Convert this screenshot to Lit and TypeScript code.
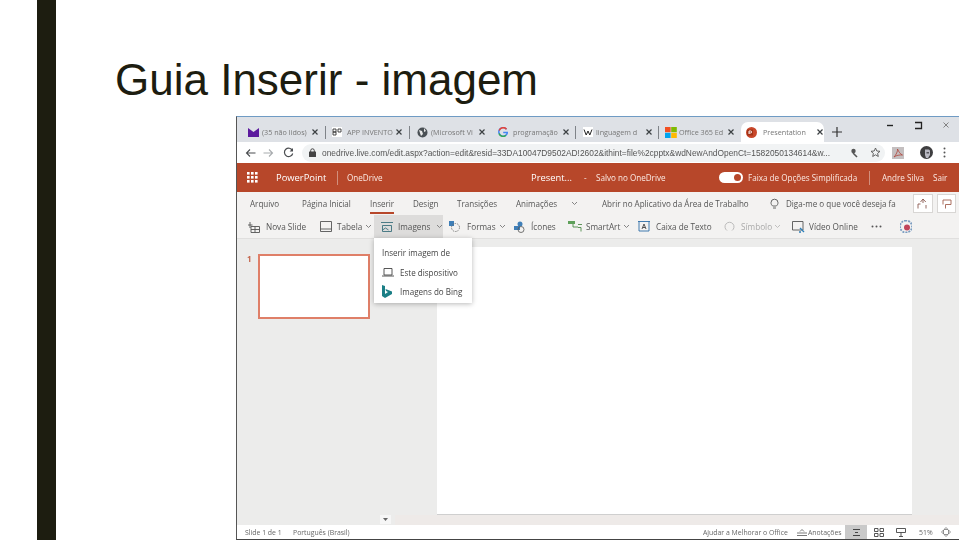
import { LitElement, html, css, svg, TemplateResult } from "lit";
import { customElement } from "lit/decorators.js";

type Item = { x: number; w: number; c: unknown; k?: string };
const ORIGIN = 237;

function row(items: Item[], start = ORIGIN) {
  let end = start;
  return items.map((it) => {
    const m = it.x - end;
    end = it.x + it.w;
    return html`<span class="cell ${it.k ?? ""}" style="margin-left:${m}px;width:${it.w}px">${it.c}</span>`;
  });
}
const ic = (w: number, h: number, body: TemplateResult | ReturnType<typeof svg>) =>
  html`<svg width=${w} height=${h} viewBox="0 0 ${w} ${h}" fill="none">${body}</svg>`;

const X = ic(8, 8, svg`<path d="M1.500 1.500l5 5M6.500 1.500l-5 5" stroke="#3c4043" stroke-width="1.200"/>`);
const CHEV = ic(7, 5, svg`<path d="M1 1l2.500 2.500L6 1" stroke="#777" stroke-width=".9"/>`);
const SEP = html`<i class="vsep"></i>`;

const mail = ic(11, 9, svg`<path d="M0 0l5.500 4L11 0v9H0z" fill="#5c1a9e"/>`);
const bp = ic(10, 10, svg`<rect width="10" height="10" fill="#fff"/><path d="M1 2h3v3H1zM1 5h3v3H1zM6 2h3v3H6z" stroke="#333" stroke-width=".9"/>`);
const globe = ic(11, 11, svg`<circle cx="5.500" cy="5.500" r="5" fill="#4a5055"/><path d="M2 3l3 1 1 3-2 2zM7 1l2 3-2 1z" fill="#e8e8e8"/>`);
const gl = ic(10, 10, svg`<path d="M8.500 2.200A4.300 4.300 0 1 0 9.400 5.500H5.200" stroke="#4285f4" stroke-width="1.500"/><path d="M1.200 3.500A4.300 4.300 0 0 1 8.500 2.200" stroke="#ea4335" stroke-width="1.500"/><path d="M1 6.500a4.300 4.300 0 0 0 7 1.700" stroke="#34a853" stroke-width="1.500"/>`);
const wiki = ic(10, 10, svg`<rect width="10" height="10" fill="#fff"/><path d="M1 2.500l2.200 5.500L5 4l1.800 4L9 2.500" stroke="#222" stroke-width="1"/>`);
const ms = ic(12, 11, svg`<rect width="5.600" height="5.200" fill="#f25022"/><rect x="6.200" width="5.600" height="5.200" fill="#7fba00"/><rect y="5.800" width="5.600" height="5.200" fill="#00a4ef"/><rect x="6.200" y="5.800" width="5.600" height="5.200" fill="#ffb900"/>`);
const pp = ic(11, 11, svg`<circle cx="5.500" cy="5.500" r="5.500" fill="#c8472a"/><rect x="1" y="2.500" width="6" height="6" fill="#a33317"/><path d="M3 7V4h1.600a1 1 0 0 1 0 2H3" stroke="#fff" stroke-width=".9"/>`);

const tabs: Item[] = [
  { x: 248, w: 11, c: mail },
  { x: 262, w: 46, c: "(35 não lidos)", k: "tabt" },
  { x: 311, w: 8, c: X },
  { x: 325, w: 1, c: SEP },
  { x: 332, w: 10, c: bp },
  { x: 347, w: 47, c: "APP INVENTO", k: "tabt" },
  { x: 395, w: 8, c: X },
  { x: 409, w: 1, c: SEP },
  { x: 417, w: 11, c: globe },
  { x: 431, w: 43, c: "(Microsoft Vi", k: "tabt" },
  { x: 478, w: 8, c: X },
  { x: 498, w: 10, c: gl },
  { x: 513, w: 44, c: "programação", k: "tabt" },
  { x: 562, w: 8, c: X },
  { x: 575, w: 1, c: SEP },
  { x: 583, w: 10, c: wiki },
  { x: 596, w: 47, c: "linguagem d", k: "tabt" },
  { x: 645, w: 8, c: X },
  { x: 658, w: 1, c: SEP },
  { x: 665, w: 12, c: ms },
  { x: 679, w: 46, c: "Office 365 Ed", k: "tabt" },
  { x: 727, w: 8, c: X },
  {
    x: 741,
    w: 83,
    k: "active",
    c: html`${pp}<span class="tabt at">Presentation</span>${X}`,
  },
  { x: 832, w: 10, c: ic(10, 10, svg`<path d="M5 0v10M0 5h10" stroke="#333" stroke-width="1.200"/>`) },
  { x: 886, w: 8, k: "wc", c: ic(8, 10, svg`<path d="M1 5.500h6" stroke="#222" stroke-width="1.400"/>`) },
  { x: 914, w: 9, k: "wc", c: ic(9, 10, svg`<path d="M1 2.500h6.500v6H1" stroke="#222" stroke-width="1.300"/>`) },
  { x: 942, w: 8, k: "wc", c: ic(8, 10, svg`<path d="M1.500 2.500l5 5M6.500 2.500l-5 5" stroke="#777" stroke-width=".9"/>`) },
];

const addr: Item[] = [
  { x: 245, w: 11, c: ic(11, 10, svg`<path d="M10.500 5H1.500M5 1.500L1.500 5 5 8.500" stroke="#4a4d50" stroke-width="1.100"/>`) },
  { x: 263, w: 11, c: ic(11, 10, svg`<path d="M.5 5h9M6 1.500L9.500 5 6 8.500" stroke="#a8abae" stroke-width="1.100"/>`) },
  { x: 283, w: 11, c: ic(11, 11, svg`<path d="M9.400 3.500A4.200 4.200 0 1 0 9.700 6.500" stroke="#4a4d50" stroke-width="1.200"/><path d="M10 1v3.400H6.600z" fill="#4a4d50"/>`) },
  {
    x: 302,
    w: 583,
    k: "pill",
    c: html`${ic(7, 9, svg`<rect y="3.500" width="7" height="5.500" rx=".5" fill="#444"/><path d="M1.700 4V2.600a1.800 1.800 0 0 1 3.600 0V4" stroke="#444"/>`)}
      <span class="url">onedrive.live.com/edit.aspx?action=edit&resid=33DA10047D9502AD!2602&ithint=file%2cpptx&wdNewAndOpenCt=1582050134614&w...</span>
      <span class="pillic">${ic(9, 10, svg`<circle cx="3.500" cy="3" r="2.200" fill="#555"/><path d="M3 5l4 4" stroke="#555" stroke-width="1.600"/>`)}</span>
      ${ic(11, 11, svg`<path d="M5.500 1l1.300 3 3.200.3-2.400 2.100.7 3.100-2.800-1.700-2.800 1.700.7-3.100L1 4.300 4.200 4z" stroke="#555" stroke-width=".9"/>`)}`,
  },
  { x: 892, w: 12, c: ic(12, 12, svg`<rect width="12" height="12" fill="#c4bfc0"/><path d="M2 10C4 8 6 4 5.500 2 7 5 8 7 10.500 8 7.500 7.800 4.500 8.200 2 10z" stroke="#b0443a" stroke-width=".8"/>`) },
  { x: 920, w: 13, c: ic(13, 13, svg`<circle cx="6.500" cy="6.500" r="6.500" fill="#3e3e40"/><path d="M5 3.500h3.500a1.500 1.500 0 0 1 1.500 1.500v4L8 12H6L5 9z" fill="#b9b9c2"/><path d="M6.500 6h2.500v1.500H6.500z" fill="#55555c"/>`) },
  { x: 943, w: 3, c: ic(3, 11, svg`<circle cx="1.500" cy="1.500" r="1" fill="#555"/><circle cx="1.500" cy="5.500" r="1" fill="#555"/><circle cx="1.500" cy="9.500" r="1" fill="#555"/>`) },
];

const waffle = ic(11, 11, svg`${[0, 4, 8].flatMap((x) => [0, 4, 8].map((y) => svg`<rect x=${x} y=${y} width="2.600" height="2.600" fill="#fff"/>`))}`);
const red: Item[] = [
  { x: 247, w: 11, c: waffle },
  { x: 276, w: 52, c: "PowerPoint", k: "rt big" },
  { x: 337, w: 1, c: html`<i class="wsep"></i>` },
  { x: 347, w: 37, c: "OneDrive", k: "rt" },
  { x: 531, w: 42, c: "Present...", k: "rt big" },
  { x: 584, w: 4, c: "-", k: "rt" },
  { x: 596, w: 72, c: "Salvo no OneDrive", k: "rt" },
  { x: 719, w: 24, c: html`<span class="toggle"><b></b></span>` },
  { x: 748, w: 110, c: "Faixa de Opções Simplificada", k: "rt" },
  { x: 869, w: 1, c: html`<i class="wsep"></i>` },
  { x: 882, w: 43, c: "Andre Silva", k: "rt" },
  { x: 933, w: 15, c: "Sair", k: "rt" },
];

const rib: Item[] = [
  { x: 250, w: 30, c: "Arquivo" },
  { x: 302, w: 50, c: "Página Inicial" },
  { x: 370, w: 24, c: html`Inserir<i class="under"></i>`, k: "ins" },
  { x: 413, w: 27, c: "Design" },
  { x: 457, w: 40, c: "Transições" },
  { x: 516, w: 41, c: "Animações" },
  { x: 571, w: 7, c: CHEV },
  { x: 602, w: 147, c: "Abrir no Aplicativo da Área de Trabalho" },
  { x: 770, w: 9, c: ic(9, 12, svg`<path d="M2.700 8C1.500 7 1 6 1 4.700a3.500 3.500 0 0 1 7 0C8 6 7.500 7 6.300 8zM3 10h3" stroke="#555" stroke-width=".9"/>`) },
  { x: 786, w: 110, c: "Diga-me o que você deseja fa" },
  { x: 913, w: 20, k: "bx", c: ic(12, 11, svg`<path d="M1 10.500V6h2.500M9 10.500V7M6 1l2.800 3M6 1L3.500 4M6 1v4" stroke="#8a5a50" stroke-width=".9"/>`) },
  { x: 937, w: 19, k: "bx", c: ic(10, 10, svg`<path d="M1 1h8v4.500H3.500V9.500M1 1v4.500" stroke="#a3604f" stroke-width=".9"/>`) },
];

const tool: Item[] = [
  { x: 248, w: 12, c: ic(12, 12, svg`<path d="M3 5.500h8.500v6H3zM3 8.500h8.500M7 5.500v6M2 1v6M0 4h4.500" stroke="#555" stroke-width=".9"/>`) },
  { x: 266, w: 42, c: "Nova Slide" },
  { x: 320, w: 12, c: ic(12, 11, svg`<path d="M.5 .500h11v10H.5zM.5 8h11" stroke="#555" stroke-width=".9"/>`) },
  { x: 337, w: 26, c: "Tabela" },
  { x: 365, w: 7, c: CHEV },
  {
    x: 374,
    w: 69,
    k: "hot",
    c: html`${ic(12, 10, svg`<path d="M0 .500h12M1.500 3.500h9v6h-9zM1.500 8l3-2 3 2" stroke="#3a6f7c" stroke-width=".9"/>`)}<span class="hott">Imagens</span>${CHEV}`,
  },
  { x: 449, w: 11, c: ic(11, 11, svg`<rect width="5" height="5" fill="#3f7fb8"/><circle cx="6.500" cy="6.500" r="4" stroke="#666" stroke-width=".8" stroke-dasharray="1.500 1" />`) },
  { x: 467, w: 28, c: "Formas" },
  { x: 499, w: 7, c: CHEV },
  { x: 514, w: 11, c: ic(11, 12, svg`<circle cx="6" cy="3" r="2.500" fill="#3f7fb8"/><rect y="5" width="6" height="4" fill="#3f7fb8"/><circle cx="7" cy="8.500" r="3" stroke="#555" stroke-width=".8"/>`) },
  { x: 531, w: 26, c: "Ícones" },
  { x: 568, w: 14, c: ic(14, 11, svg`<rect width="7" height="3" fill="#5fa05a"/><path d="M5 3v3h5M10 3.500h4M10 6.500h3v4" stroke="#4f8a4a" stroke-width=".9"/>`) },
  { x: 586, w: 33, c: "SmartArt" },
  { x: 623, w: 7, c: CHEV },
  { x: 638, w: 12, c: ic(12, 11, svg`<path d="M0 .500h12M1 .500v9.500h10V.500" stroke="#2f6ea8" stroke-width=".9"/><path d="M4 8l2-5 2 5M4.800 6.500h2.500" stroke="#444" stroke-width=".9"/>`) },
  { x: 656, w: 55, c: "Caixa de Texto" },
  { x: 724, w: 11, c: ic(11, 11, svg`<path d="M3 9.500A4.500 4.500 0 1 1 8 9.500" stroke="#b4b4b4" stroke-width=".9"/>`) },
  { x: 741, w: 30, c: "Símbolo", k: "dim" },
  { x: 774, w: 7, c: CHEV, k: "faded" },
  { x: 792, w: 13, c: ic(13, 12, svg`<path d="M.5 .500h10.500v8.500H.5z" stroke="#555" stroke-width=".9"/><path d="M8 7l4 4M7 11h2" stroke="#2f7fb8" stroke-width="1.400"/>`) },
  { x: 809, w: 50, c: "Vídeo Online" },
  { x: 871, w: 11, c: ic(11, 3, svg`<circle cx="1.500" cy="1.500" r="1" fill="#555"/><circle cx="5.500" cy="1.500" r="1" fill="#555"/><circle cx="9.500" cy="1.500" r="1" fill="#555"/>`) },
  { x: 900, w: 12, c: ic(12, 13, svg`<path d="M6 .500a6 6 0 1 0 .01 0" stroke="#7a9cc0" stroke-width="1.800" stroke-dasharray="2 1"/><circle cx="7" cy="7.500" r="3" fill="#c2455a"/>`) },
];

const status: Item[] = [
  { x: 245, w: 37, c: "Slide 1 de 1" },
  { x: 293, w: 56, c: "Português (Brasil)" },
  { x: 703, w: 86, c: "Ajudar a Melhorar o Office" },
  { x: 797, w: 45, c: html`${ic(10, 7, svg`<path d="M0 4h10M0 6.500h10M3 2.500L5 .500l2 2" stroke="#555" stroke-width=".8"/>`)}<span class="ann">Anotações</span>`, k: "annw" },
  { x: 845, w: 22, k: "stOn", c: ic(9, 7, svg`<path d="M1 .500h7M1 6.500h7M3 3.500h3" stroke="#444"/>`) },
  { x: 874, w: 10, c: ic(10, 9, svg`<path d="M.500 .500h3.500v3H.500zM6 .500h3.500v3H6zM.500 5.500h3.500v3H.500zM6 5.500h3.500v3H6z" stroke="#444" stroke-width=".9"/>`) },
  { x: 896, w: 10, c: ic(10, 9, svg`<path d="M.500 .500h9v4h-9zM5 4.500v4M3 8.500h4" stroke="#444" stroke-width=".9"/>`) },
  { x: 919, w: 14, c: "51%" },
  { x: 941, w: 10, c: ic(10, 10, svg`<path d="M5 .500L7 2.500H3zM5 9.500L3 7.500h4zM.500 5L2.500 3v4zM9.500 5L7.500 7V3z" stroke="#666" stroke-width=".7"/>`) },
];

@customElement("app-root")
export class AppRoot extends LitElement {
  static styles = css`
    :host { display: flex; width: 960px; height: 540px; overflow: hidden; background: #fff; font-family: "Liberation Sans", Arial, sans-serif; }
    .bar { width: 19px; margin-left: 37px; background: #1d1d10; flex: none; }
    .main { flex: 1; display: flex; flex-direction: column; min-width: 0; }
    h1 { margin: 0 0 0 59px; height: 116px; padding-top: 55px; box-sizing: border-box; font-weight: 400; font-size: 44px; line-height: 50px; color: #1d1d10; white-space: nowrap; }
    .win { margin-left: 180px; width: 723px; height: 424px; box-sizing: border-box; display: flex; flex-direction: column; border-top: 1px solid #6f9bc4; border-left: 1px solid #555; border-bottom: 1px solid #444; font-family: "Open Sans", sans-serif; font-size: 8.2px; color: #444; position: relative; filter: blur(0.4px); }
    .r { display: flex; align-items: center; flex: none; white-space: nowrap; }
    .cell { flex: none; display: inline-flex; align-items: center; }
    .tabs { height: 25px; background: #dee1e6; align-items: flex-end; color: #666; }
    .tabs .cell { height: 20px; }
    .tabs .wc { align-self: flex-start; height: 10px; margin-top: 3px; }
    .tabt { font-size: 7.2px; color: #777; }
    .at { margin: 0 9px 0 6px; width: 44px; flex: none; }
    .active { background: #fff; border-radius: 7px 7px 0 0; padding-left: 5px; box-sizing: border-box; }
    .vsep { width: 1px; height: 13px; background: #7f8388; }
    .addr { height: 21px; background: #fff; }
    .pill { height: 18px; background: #f1f3f4; border-radius: 9px; padding-left: 7px; box-sizing: border-box; }
    .url { width: 518px; margin-left: 6px; font-family: "Liberation Sans", sans-serif; font-size: 8.4px; color: #555; flex: none; }
    .pillic { margin: 0 11px 0 10px; display: inline-flex; }
    .red { height: 29px; background: #b7472a; color: #fff; }
    .rt { font-size: 8.1px; color: #fbe9e3; }
    .big { font-size: 9.4px; color: #fff; }
    .wsep { width: 1px; height: 14px; background: #d28f7d; }
    .toggle { width: 24px; height: 11px; border-radius: 6px; background: #fff; display: flex; align-items: center; justify-content: flex-end; padding-right: 2px; box-sizing: border-box; }
    .toggle b { width: 7px; height: 7px; border-radius: 50%; background: #b7472a; }
    .rib { height: 23px; background: #f3f2f1; font-size: 8.05px; color: #555; }
    .ins { position: relative; align-self: stretch; }
    .under { position: absolute; left: 0; right: 0; bottom: 1px; height: 2px; background: #b7472a; }
    .bx { justify-content: center; height: 19px; box-sizing: border-box; background: #fff; border: 1px solid #d8d6d4; }
    .tool { height: 24px; background: #f3f2f1; border-bottom: 1px solid #e0dfde; box-sizing: border-box; color: #555; }
    .hot { align-self: stretch; background: #dddcdb; padding-left: 7px; box-sizing: border-box; }
    .hott { margin: 0 5px 0 5px; width: 33px; flex: none; }
    .dim { color: #aaa; }
    .faded { opacity: .45; }
    .body { flex: 1; min-height: 0; display: grid; grid-template-columns: 200px 475px 1fr; grid-template-rows: 8px 267px 1fr; background: #ececeb; }
    .pane { grid-column: 1; grid-row: 1 / 4; display: flex; align-items: flex-start; padding: 15px 0 0 10px; position: relative; }
    .num { font-size: 8px; font-weight: 700; color: #c4664d; width: 11px; margin-top: -1px; }
    .thumb { width: 112px; height: 65px; box-sizing: border-box; background: #fff; border: 2px solid #df7f68; }
    .collapse { position: absolute; left: 143px; bottom: 1px; width: 11px; height: 9px; background: #f6f6f6; display: flex; align-items: center; justify-content: center; }
    .canvas { grid-column: 2; grid-row: 2; background: #fff; box-shadow: 0 1px 0 #cfcfcf; }
    .bottom { grid-column: 2 / 4; grid-row: 3; background: #eeeae8; margin-left: -42px; margin-top: 1px; }
    .status { height: 14px; background: #fff; color: #666; font-size: 6.9px; }
    .stOn { align-self: stretch; background: #c9c9c9; justify-content: center; }
    .annw { gap: 1px; }
    .ann { flex: none; }
    .menu { position: absolute; left: 137px; top: 121px; width: 98px; height: 65px; background: #fff; box-shadow: 0 1px 5px rgba(0,0,0,.28); padding: 9px 0 0 8px; box-sizing: border-box; color: #444; font-size: 8.05px; display: flex; flex-direction: column; }
    .mh { height: 11px; line-height: 11px; margin-bottom: 9px; }
    .mi { display: flex; align-items: center; height: 11px; margin-bottom: 8px; white-space: nowrap; }
    .mic { width: 18px; flex: none; display: inline-flex; }
  `;

  render() {
    return html`
      <div class="bar"></div>
      <div class="main">
        <h1>Guia Inserir - imagem</h1>
        <div class="win">
          <div class="r tabs">${row(tabs)}</div>
          <div class="r addr">${row(addr)}</div>
          <div class="r red">${row(red)}</div>
          <div class="r rib">${row(rib)}</div>
          <div class="r tool">${row(tool)}</div>
          <div class="body">
            <div class="pane">
              <span class="num">1</span>
              <div class="thumb"></div>
              <span class="collapse">${ic(5, 3, svg`<path d="M0 0h5L2.500 3z" fill="#666"/>`)}</span>
            </div>
            <div class="canvas"></div>
            <div class="bottom"></div>
          </div>
          <div class="r status">${row(status)}</div>
          <div class="menu">
            <div class="mh">Inserir imagem de</div>
            <div class="mi"><span class="mic">${ic(12, 9, svg`<path d="M2 .500h8v6.500H2zM0 8h12" stroke="#444" stroke-width=".9"/>`)}</span>Este dispositivo</div>
            <div class="mi"><span class="mic">${ic(10, 13, svg`<path d="M0 0l3 1v8l3-2-2-1-.5-2L10 6.500v2.500L3 13 0 11z" fill="#1b7f86"/>`)}</span>Imagens do Bing</div>
          </div>
        </div>
      </div>
    `;
  }
}
